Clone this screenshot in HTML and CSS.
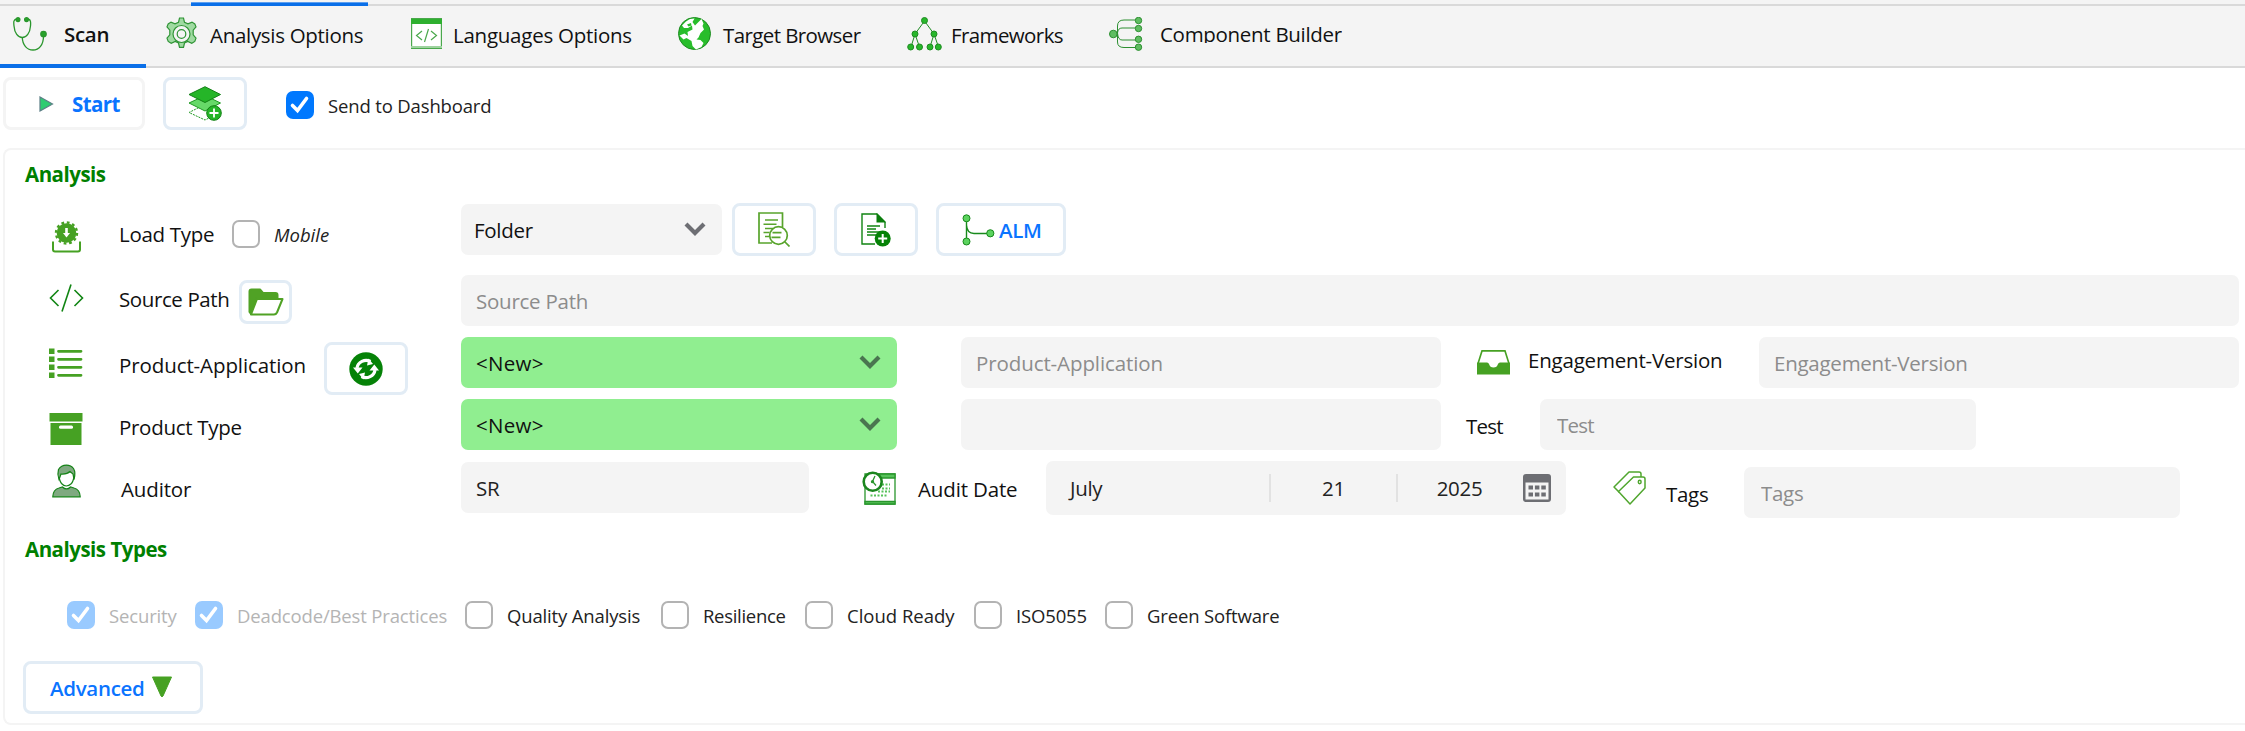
FILE: index.html
```
<!DOCTYPE html>
<html lang="en">
<head>
  <meta charset="UTF-8">
  <meta name="viewport" content="width=device-width, initial-scale=1.0">
  <title>Scan</title>
  <link rel="stylesheet" href="styles.css">
</head>
<body>

  <!-- Strip of the outer tab bar -->
  <div class="outer-strip"><div class="outer-active"></div></div>

  <!-- Tabs -->
  <nav class="tabs">
    <a class="tab tab-scan active">
      <svg width="35" height="35" viewBox="0 0 35 35" fill="none" stroke="#2a962d" stroke-width="1.3">
        <path d="M4 2 C0 2 0.7 6 1 9 C1.5 16 5 20.5 9.300 20.500 C13.500 20.500 17 16 17.500 9 C17.800 6 18 2 14.500 2"/>
        <path d="M9.300 20.500 C9.500 28 14 33 20 33 C26 33 30.500 28 30.500 19"/>
        <circle cx="5" cy="2.600" r="1.900" fill="#27a32a"/><circle cx="13.500" cy="2.600" r="1.900" fill="#27a32a"/>
        <circle cx="30.500" cy="17" r="2.700" fill="#27a32a"/>
      </svg>
      <span>Scan</span>
    </a>
    <a class="tab tab-options">
      <svg width="33" height="34" viewBox="0 0 33 34" fill="none" stroke="#2f9435" stroke-width="1.200">
        <path fill="#9fdaa1" d="M14.500 1 h4 l1 4.300 l3.500 1.600 l4-1.800 l2.800 1.800 l1.200 3 l-2.800 3.300 v4.600 l2.800 3.300 l-1.200 3.300 l-3 1.800 l-4-1.800 l-3.300 1.600 l-1 4.400 h-4 l-1-4.400 l-3.300-1.600 l-4 1.800 l-3-1.800 l-1.200-3.300 l2.800-3.300 v-4.600 l-2.800-3.300 l1.200-3 l2.800-1.800 l4 1.800 l3.500-1.600 z"/>
        <circle cx="16.500" cy="17" r="8.500" fill="#f4f4f4"/><circle cx="16.500" cy="17" r="4.300"/>
      </svg>
      <span>Analysis Options</span>
    </a>
    <a class="tab tab-languages">
      <svg width="31" height="31" viewBox="0 0 31 31" fill="none" stroke="#4aa84c" stroke-width="1.200">
        <path fill="#fff" d="M.6.6 h29.800 v29.800 h-29.800 z"/>
        <path fill="#2eb02f" stroke="none" d="M0 1 h31 v5 h-31 z"/>
        <path stroke="#9ed39f" stroke-width="2" d="M0 29 h31"/>
        <path d="M11 13 l-5.500 4.500 l5.500 4.500 M20 13 l5.500 4.500 l-5.500 4.500 M17.500 11 l-4 13"/>
      </svg>
      <span>Languages Options</span>
    </a>
    <a class="tab tab-browser">
      <svg width="33" height="33" viewBox="0 0 33 33">
        <circle cx="16.500" cy="16.500" r="16" fill="#28bd2b" stroke="#1d8a20"/>
        <path fill="#fff" d="M4 8.500 L8 4.500 L12 2 L16.500 1.500 L14.500 5 L17 8.500 L20.500 5 L23.500 2 L25.500 6.500 L24.500 9 L26 12.500 L22.500 16 L20.500 20.500 L18.500 22.500 L22.500 23 L25.500 26 L23.500 30 L18 32.500 L14.500 29 L13.500 24 L8.500 21 L5.500 22.500 L1.500 18.500 L6.500 16.500 L10 19 L9.500 15 L14.500 12.500 L14 8.500 L10 11 L6 11 Z"/>
        <path fill="#28bd2b" d="M9 7.500 l4-1.500 l.5 2.500 l-3 1 z"/>
      </svg>
      <span>Target Browser</span>
    </a>
    <a class="tab tab-frameworks">
      <svg width="35" height="34" viewBox="0 0 35 34" fill="#27b72a" stroke="#1e8c22">
        <path fill="none" d="M17.500 4 L8 17 L4 30 M8 17 L12.500 30 M17.500 4 L27 17 L23 30 M27 17 L31.500 30"/>
        <circle cx="17.500" cy="3.500" r="3"/><circle cx="8" cy="17" r="3"/><circle cx="27" cy="17" r="3"/>
        <circle cx="3.700" cy="30" r="3"/><circle cx="12.500" cy="30" r="3"/><circle cx="23" cy="30" r="3"/><circle cx="31.300" cy="30" r="3"/>
      </svg>
      <span>Frameworks</span>
    </a>
    <a class="tab tab-builder">
      <svg width="34" height="34" viewBox="0 0 34 34" fill="#5fbd61" stroke="#2c8f30">
        <path fill="none" d="M29 3 H15 Q8.500 3 8.500 9 V25 Q8.500 30.500 15 30.500 H29 M29 11 H13 Q9 11 8.500 16 Q9 23 13 23 H29"/>
        <circle cx="4.300" cy="17" r="3.800"/><circle cx="29.500" cy="3.500" r="3.200"/><circle cx="29.500" cy="11.500" r="3.200"/><circle cx="29.500" cy="22.300" r="3.200"/><circle cx="29.500" cy="30.200" r="3.200"/>
      </svg>
      <span>Component Builder</span>
    </a>
  </nav>

  <!-- Toolbar -->
  <div class="toolbar">
    <button class="btn btn-start">
      <svg width="15" height="16" viewBox="0 0 15 16"><path d="M1 1 L13.500 8 L1 15 Z" fill="#2ecc71" stroke="#5c7f86" stroke-width="1.200"/></svg>
      <span>Start</span>
    </button>
    <button class="btn btn-stack">
      <svg width="34" height="35" viewBox="0 0 34 35" stroke="#1f9a22" stroke-width="1">
        <path fill="#fff" stroke-dasharray="2 1" d="M17 18.500 L32 26.500 L17 34 L1 26.500 Z"/>
        <path fill="#66d968" d="M17 9.500 L32.500 17 L17 25 L1 17 Z"/>
        <path fill="#25b528" stroke="#128015" d="M17 .7 L32.500 8.500 L17 16.500 L1 8.500 Z"/>
        <circle cx="26" cy="27" r="7.300" fill="#25b528" stroke="#128015"/>
        <path stroke="#fff" stroke-width="1.800" d="M26 22.500 v9 M21.500 27 h9"/>
      </svg>
    </button>
    <label class="check check-dashboard"><i class="box on"><svg width="28" height="28" viewBox="0 0 28 28"><path d="M6.500 14.500 L11.500 19.500 L20.500 7.500"/></svg></i><span>Send to Dashboard</span></label>
  </div>

  <!-- Analysis panel -->
  <div class="panel">
    <h2>Analysis</h2>

    <div class="row row-load">
      <div class="lead">
        <div class="icon">
          <svg width="29" height="32" viewBox="0 0 29 32">
            <circle cx="14.500" cy="12" r="9.800" fill="#46a123"/>
            <circle cx="14.500" cy="12" r="10.500" fill="none" stroke="#46a123" stroke-width="2.400" stroke-dasharray="2.750 2.750"/>
            <path d="M14.500 7 V13" stroke="#fff" stroke-width="2.600"/><path d="M11 12 h7 l-3.500 4.500 z" fill="#fff"/>
            <path d="M1 20.500 V28.500 Q1 30.500 3 30.500 H26 Q28 30.500 28 28.500 V20.500" fill="none" stroke="#46a123" stroke-width="2"/>
          </svg>
        </div>
        <span class="label">Load Type</span>
        <label class="check check-mobile"><i class="box"></i><em>Mobile</em></label>
      </div>
      <div class="select select-folder"><span>Folder</span><svg width="22" height="14" viewBox="0 0 22 14"><path d="M2 2 L11 11 L20 2"/></svg></div>
      <button class="btn btn-view">
        <svg width="32" height="35" viewBox="0 0 32 35" fill="none" stroke="#58a42c" stroke-width="1.700">
          <path d="M24.500 15 V1 H1 V31 H14"/>
          <path stroke-width="1.400" d="M7 8 h13 M5.500 12.300 h13 M7 16.500 h8 M5.500 20.500 h6 M7 24.500 h5"/>
          <circle cx="20.500" cy="23.500" r="8.800"/><path d="M27 30 L31.500 34.500 M14.500 20.700 h9 M13.500 25.300 h9"/>
        </svg>
      </button>
      <button class="btn btn-add">
        <svg width="30" height="34" viewBox="0 0 30 34" fill="none" stroke="#108412" stroke-width="1.400">
          <path d="M24 15 V9 L16 1 H1 V31 H14"/>
          <path fill="#0a7d0c" stroke="none" d="M15.500 0 L25 9.500 H15.500 Z"/>
          <path d="M6 13 h13 M6 16 h9 M6 19 h13 M6 22 h9"/>
          <circle cx="21.700" cy="25.500" r="8" fill="#058207" stroke="none"/>
          <path stroke="#fff" stroke-width="2" d="M21.700 21 v9 M17.200 25.500 h9"/>
        </svg>
      </button>
      <button class="btn btn-alm">
        <svg width="33" height="32" viewBox="0 0 33 32" fill="#5cd35f" stroke="#188a1c">
          <path fill="none" stroke-width="1.400" d="M4.500 5 V28 M4.500 11 Q5 19.500 12 19.500 H26"/>
          <circle cx="4.500" cy="4.300" r="3.500"/><circle cx="4.500" cy="27.500" r="3.500"/><circle cx="28.300" cy="19.300" r="3.600"/>
        </svg>
        <span>ALM</span>
      </button>
    </div>

    <div class="row row-source">
      <div class="lead">
        <div class="icon">
          <svg width="35" height="28" viewBox="0 0 35 28" fill="none" stroke="#118513" stroke-width="1.600"><path d="M9.500 6 L1.500 14 L9.500 22 M25.500 6 L33.500 14 L25.500 22 M22 0.500 L13 27.500"/></svg>
        </div>
        <span class="label">Source Path</span>
        <button class="btn btn-folder">
          <svg width="36" height="28" viewBox="0 0 36 28" stroke="#50a225" stroke-width="2" stroke-linejoin="round">
            <path fill="#50a225" d="M1.500 24 V3.500 Q1.500 1.500 3.500 1.500 H12 L15 5 H27.500 Q29.500 5 29.500 7 V10 H10 Q8.500 10 7.500 12 L3 26 Z"/>
            <path fill="#fff" d="M9 11 H34.500 L29 24.500 Q28 26.500 26 26.500 H3 Z"/>
          </svg>
        </button>
      </div>
      <input class="field grow" placeholder="Source Path">
    </div>

    <div class="row row-product">
      <div class="lead">
        <div class="icon">
          <svg width="34" height="31" viewBox="0 0 34 31" fill="#46a123">
            <path d="M0 .5 h5.500 v5.500 h-5.500 z M0 8.500 h5.500 v5.500 h-5.500 z M0 16.500 h5.500 v5.500 h-5.500 z M0 24.500 h5.500 v5.500 h-5.500 z"/>
            <path stroke="#46a123" stroke-width="2.800" stroke-linecap="round" d="M9.500 3.300 h22.500 M9.500 11.300 h22.500 M9.500 19.300 h22.500 M9.500 27.300 h22.500"/>
          </svg>
        </div>
        <span class="label label-product">Product-Application</span>
        <button class="btn btn-refresh">
          <svg width="34" height="34" viewBox="0 0 34 34" fill="none">
            <circle cx="17" cy="17" r="16.700" fill="#058207"/>
            <path stroke="#fff" stroke-width="3.200" d="M8 16 A9.200 8.600 0 0 1 21.500 9.500 M26 18 A9.200 8.600 0 0 1 12.500 24.500"/>
            <path fill="#fff" d="M4 15.500 h9.500 l-4.700 6 z M20.500 18.500 h9.500 l-4.700-6 z M19.500 6.500 l4.500 5.500 l-6 1.500 z M14.500 27.500 l-4.500-5.500 l6-1.500 z"/>
          </svg>
        </button>
      </div>
      <div class="select select-new"><span>&lt;New&gt;</span><svg width="22" height="14" viewBox="0 0 22 14"><path d="M2 2 L11 11 L20 2"/></svg></div>
      <input class="field field-product" placeholder="Product-Application">
      <svg class="icon-inbox" width="33" height="25" viewBox="0 0 33 25">
        <path d="M1.200 13 L5 .9 H28 L31.800 13" fill="none" stroke="#46a123" stroke-width="1.600"/>
        <path d="M0 12.500 H10 Q11.500 12.500 12 14 Q13 17.500 16.500 17.500 Q20 17.500 21 14 Q21.500 12.500 23 12.500 H33 V24.500 H0 Z" fill="#46a123"/>
      </svg>
      <span class="label label-engagement">Engagement-Version</span>
      <input class="field grow" placeholder="Engagement-Version">
    </div>

    <div class="row row-type">
      <div class="lead">
        <div class="icon">
          <svg width="34" height="32" viewBox="0 0 34 32" fill="#46a123">
            <path d="M.5 0 h33 v8.500 h-33 z M1.500 10 h31 v22 h-31 z"/><rect x="10" y="12.500" width="14" height="3.200" rx="1.500" fill="#fff"/>
          </svg>
        </div>
        <span class="label">Product Type</span>
      </div>
      <div class="select select-new"><span>&lt;New&gt;</span><svg width="22" height="14" viewBox="0 0 22 14"><path d="M2 2 L11 11 L20 2"/></svg></div>
      <input class="field field-product">
      <span class="label label-test">Test</span>
      <input class="field field-test" placeholder="Test">
    </div>

    <div class="row row-auditor">
      <div class="lead">
        <div class="icon">
          <svg width="29" height="34" viewBox="0 0 29 33" fill="#7fa980" stroke="#158317" stroke-width="1.200">
            <path fill="#fff" d="M7 9 Q7 16 9.500 19 Q14 24 19.500 19 Q22 16 22 9 Q15 4 7 9 Z"/>
            <path d="M7 15 Q5 10 6.500 5 Q9 .6 14.500 .6 Q19 .6 21.500 4 Q24 8 22 15 L21 9.500 L18 7 Q15 10 9 9.500 Z"/>
            <path d="M.8 32.300 Q1 25 7 23.500 L10.500 22.500 Q14.500 26.500 18.500 22.500 L22 23.500 Q28 25 28.200 32.300 Z"/>
          </svg>
        </div>
        <span class="label label-auditor">Auditor</span>
      </div>
      <input class="field field-auditor" value="SR">
      <svg class="icon-date" width="34" height="34" viewBox="0 0 34 34" fill="none" stroke="#2a962d" stroke-width="1.300">
        <path fill="#fff" d="M3 3 h30 v30 h-30 z"/>
        <path fill="#57c25a" d="M16 3 h17 v4 h-17 z M3 30.500 h30 v2.500 h-30 z"/>
        <path stroke="#57c25a" stroke-width="2" stroke-dasharray="2 1.500" d="M20 13.500 h8 M20 17.500 h8 M16 20.500 h12 M8.500 24.500 h16"/>
        <circle cx="10.700" cy="10.700" r="9" fill="#fff" stroke="#1b861e" stroke-width="2.600"/>
        <path d="M13 5 L10.500 10.500 L14 14.500"/><circle cx="10.500" cy="10.700" r="1" fill="#2a962d"/>
      </svg>
      <span class="label label-date">Audit Date</span>
      <div class="date">
        <span class="month">July</span><span class="day">21</span><span class="year">2025</span>
        <svg width="28" height="28" viewBox="0 0 28 28">
          <rect width="28" height="28" rx="3" fill="#6d6e73"/><path fill="#f4f4f4" d="M2.500 8.500 h23 v17 h-23 z"/>
          <path stroke="#6d6e73" stroke-width="4" stroke-dasharray="4.500 1.900" d="M5.500 13.500 h17.500 M5.500 20.500 h17.500"/>
        </svg>
      </div>
      <svg class="icon-tags" width="33" height="34" viewBox="0 0 33 34" fill="#fff" stroke="#50a62e" stroke-width="1.500" stroke-linejoin="round">
        <path d="M16 1 H26 Q28 1 28 3 V16 L6 21 L1 16 Z"/>
        <path d="M20.500 6 H30 Q32 6 32 8 V17 L17 33 L5.500 20.500 Z"/>
        <ellipse cx="26.700" cy="11" rx="1.400" ry="1.700"/>
      </svg>
      <span class="label label-tags">Tags</span>
      <input class="field field-tags" placeholder="Tags">
    </div>

    <h2 class="types-title">Analysis Types</h2>

    <div class="types">
      <label class="check disabled c1"><i class="box on"><svg width="28" height="28" viewBox="0 0 28 28"><path d="M6.500 14.500 L11.500 19.500 L20.500 7.500"/></svg></i><span>Security</span></label>
      <label class="check disabled c2"><i class="box on"><svg width="28" height="28" viewBox="0 0 28 28"><path d="M6.500 14.500 L11.500 19.500 L20.500 7.500"/></svg></i><span>Deadcode/Best Practices</span></label>
      <label class="check c3"><i class="box"></i><span>Quality Analysis</span></label>
      <label class="check c4"><i class="box"></i><span>Resilience</span></label>
      <label class="check c5"><i class="box"></i><span>Cloud Ready</span></label>
      <label class="check c6"><i class="box"></i><span>ISO5055</span></label>
      <label class="check c7"><i class="box"></i><span>Green Software</span></label>
    </div>

    <button class="btn btn-advanced">
      <span>Advanced</span>
      <svg width="22" height="22" viewBox="0 0 22 22"><path d="M1.500 1 H20.500 L12 20 Q11 21.500 10 20 Z" fill="#46a123" stroke="#46a123" stroke-linejoin="round"/></svg>
    </button>
  </div>

</body>
</html>
```
FILE: styles.css
```
* {
  box-sizing: border-box;
}

body {
  margin: 0;
  width: 2245px;
  height: 731px;
  overflow: hidden;
  background-color: #fff;
  font-family: "Open Sans", "Noto Sans", sans-serif;
  font-size: 20.5px;
  line-height: 28px;
  letter-spacing: -0.3px;
  color: #111;
  white-space: nowrap;
}

svg {
  display: block;
  flex: none;
}

/* Header */
.outer-strip {
  height: 6px;
  padding-top: 2px;
  background-color: #f4f4f4;
  border-bottom: 2px solid #d9d9d9;
}

.outer-active {
  width: 177px;
  height: 4px;
  margin-left: 191px;
  background: linear-gradient(#5c9ff0 1px, #0a6fe8 1px);
}

.tabs {
  display: flex;
  height: 62px;
  background-color: #f4f4f4;
  border-bottom: 2px solid #d9d9d9;
}

.tab {
  display: flex;
  height: 62px;
  padding-top: 11px;
  border-bottom: 4px solid transparent;
}

.tab span {
  margin-top: 4px;
}

.tab-scan {
  width: 146px;
  padding-left: 13px;
  font-weight: 600;
}

.tab-scan span {
  margin: 3px 0 0 16px;
}

.active {
  border-bottom-color: #0a6fe8;
}

.tab-options {
  width: 245px;
  padding-left: 19px;
  letter-spacing: -0.3px;
}

.tab-options span {
  margin-left: 12px;
}

.tab-languages {
  width: 267px;
  padding-left: 20px;
  letter-spacing: -0.25px;
}

.tab-languages svg {
  margin-top: 1px;
}

.tab-languages span {
  margin-left: 11px;
}

.tab-browser {
  width: 229px;
  padding-left: 20px;
  letter-spacing: -0.6px;
}

.tab-browser span {
  margin-left: 12px;
}

.tab-frameworks {
  width: 202px;
  padding-left: 20px;
  letter-spacing: -0.6px;
}

.tab-frameworks span {
  margin-left: 9px;
}

.tab-builder {
  padding-left: 20px;
}

.tab-builder span {
  height: 23px;
  margin: 3px 0 0 17px;
  overflow: hidden;
}

/* Buttons */
.btn {
  display: flex;
  align-items: center;
  flex: none;
  height: 53px;
  padding: 0;
  border: 3px solid #e2ecf5;
  border-radius: 8px;
  background-color: #fff;
  color: #0a74ff;
  font: inherit;
  letter-spacing: inherit;
}

.toolbar {
  display: flex;
  height: 80px;
  padding: 9px 0 0 3px;
}

.btn-start {
  width: 142px;
  padding-left: 33px;
  border-color: #f4f4f4;
  font-weight: 700;
  letter-spacing: -0.6px;
}

.btn-start span {
  margin-left: 18px;
}

.btn-stack {
  width: 84px;
  margin-left: 18px;
  justify-content: center;
}

/* Checkboxes */
.check {
  display: flex;
  align-items: center;
  height: 28px;
  font-size: 18.5px;
  letter-spacing: -0.15px;
  color: #222;
}

.check span,
.check em {
  margin-top: 2px;
  padding-left: 14px;
}

.check em {
  letter-spacing: 0;
}

.box {
  width: 28px;
  height: 28px;
  flex: none;
  border: 2px solid #b3b3b3;
  border-radius: 7px;
  background-color: #fff;
}

.box.on {
  border: 0;
  background-color: #0078fe;
}

.box path {
  fill: none;
  stroke: #fff;
  stroke-width: 3.6;
  stroke-linecap: round;
}

.disabled .box {
  background-color: #99caff;
}

.disabled span {
  color: #b4b4b4;
}

.check-dashboard {
  margin: 14px 0 0 39px;
}

.check-mobile {
  height: 56px;
}

/* Panel */
.panel {
  height: 577px;
  margin-left: 3px;
  padding-top: 10px;
  border: 2px solid #f4f4f4;
  border-right: 0;
  border-radius: 8px 0 0 8px;
}

h2 {
  margin: 0 0 0 20px;
  font-size: 20.5px;
  line-height: 28px;
  letter-spacing: -0.5px;
  color: #008000;
}

.row {
  display: flex;
  align-items: center;
  height: 51px;
  padding-right: 6px;
}

.lead {
  display: flex;
  align-items: center;
  flex: none;
  width: 456px;
  height: 51px;
}

.icon {
  display: flex;
  justify-content: center;
  flex: none;
  width: 84px;
  margin-left: 19px;
}

.lead .label {
  padding-left: 11px;
}

.row-load {
  height: 53px;
  margin-top: 15px;
}

.row-load .icon {
  margin-top: 14px;
}

.row-load .label {
  width: 124px;
  margin-top: 9px;
}

.row-load .check {
  margin-top: 9px;
}

.row-source {
  margin-top: 19px;
}

.row-source .icon {
  margin-top: -5px;
}

.row-source .label {
  width: 131px;
  margin-top: -3px;
  letter-spacing: -0.4px;
}

.row-product {
  margin-top: 11px;
}

.row-product .icon {
  margin-top: 2px;
}

.row-product .label-product {
  width: 216px;
  margin-top: 5px;
  letter-spacing: -0.1px;
}

.row-type {
  margin-top: 11px;
}

.row-type .icon {
  margin-top: 9px;
}

.row-type .label {
  margin-top: 5px;
}

.row-auditor {
  height: 54px;
  margin-top: 11px;
}

.row-auditor .icon {
  margin-top: -14px;
}

.row-auditor .label-auditor {
  margin-top: 2px;
  padding-left: 13px;
  letter-spacing: -0.15px;
}

.btn-view,
.btn-add {
  width: 84px;
  justify-content: center;
}

.btn-view {
  margin-left: 10px;
}

.btn-add,
.btn-alm {
  margin-left: 18px;
}

.btn-alm {
  width: 130px;
  padding-left: 23px;
  font-weight: 600;
}

.btn-alm span {
  margin-left: 4px;
}

.btn-folder {
  width: 53px;
  height: 44px;
  margin-top: 3px;
  justify-content: center;
}

.btn-refresh {
  width: 84px;
  margin-top: 12px;
  justify-content: center;
}

.field,
.select,
.date {
  flex: none;
  height: 51px;
  padding: 0 15px;
  border: 0;
  border-radius: 7px;
  background-color: #f4f4f4;
  font: inherit;
  letter-spacing: inherit;
  color: #222;
}

.field::placeholder {
  color: #8c8c8c;
  opacity: 1;
}

.field.grow {
  flex: 1;
  min-width: 0;
  letter-spacing: -0.25px;
}

.select {
  display: flex;
  align-items: center;
  justify-content: space-between;
  color: #111;
}

.select path {
  fill: none;
  stroke: #6d6e73;
  stroke-width: 4.2;
}

.select svg {
  margin: -2px 1px 0 0;
}

.select-folder {
  width: 261px;
  padding-left: 13px;
}

.select-new {
  width: 436px;
  background-color: #90ee90;
}

.select-new path {
  stroke: #4a7550;
}

.select-new span {
  letter-spacing: 0.3px;
}

.field-product {
  width: 480px;
  margin-left: 64px;
  letter-spacing: -0.1px;
}

.icon-inbox {
  margin-left: 36px;
}

.label-engagement {
  width: 249px;
  margin-top: -5px;
  padding-left: 18px;
  letter-spacing: -0.2px;
}

.row-type .label-test {
  width: 99px;
  padding-left: 25px;
  margin-top: 2px;
  letter-spacing: -0.8px;
}

.field-test {
  width: 436px;
  padding-left: 17px;
  letter-spacing: -0.8px;
}

.field-auditor {
  width: 348px;
  margin-top: -1px;
}

.icon-date {
  margin-left: 53px;
}

.label-date {
  width: 150px;
  padding-left: 22px;
  margin-top: 2px;
  letter-spacing: -0.15px;
}

.date {
  display: flex;
  align-items: center;
  width: 520px;
  height: 54px;
  padding: 0 15px 0 24px;
}

.date span {
  height: 28px;
}

.month {
  width: 201px;
  border-right: 2px solid #e2e2e2;
}

.day {
  width: 127px;
  border-right: 2px solid #e2e2e2;
  text-align: center;
}

.year {
  width: 125px;
  text-align: center;
  padding-right: 2px;
}

.icon-tags {
  margin-left: 47px;
}

.label-tags {
  width: 98px;
  padding-left: 20px;
  margin-top: 11px;
}

.field-tags {
  width: 436px;
  margin-top: 9px;
  padding-left: 17px;
}

.types-title {
  margin-top: 20px;
}

.types {
  display: flex;
  margin: 38px 0 32px 62px;
}

.c1 { width: 128px; }
.c2 { width: 270px; }
.c3 { width: 196px; }
.c4 { width: 144px; letter-spacing: -0.3px; }
.c5 { width: 169px; letter-spacing: 0; }
.c6 { width: 131px; }

.btn-advanced {
  width: 180px;
  margin-left: 18px;
  padding-left: 24px;
  font-weight: 600;
  letter-spacing: -0.3px;
}

.btn-advanced svg {
  margin: -2px 0 0 6px;
}
```
